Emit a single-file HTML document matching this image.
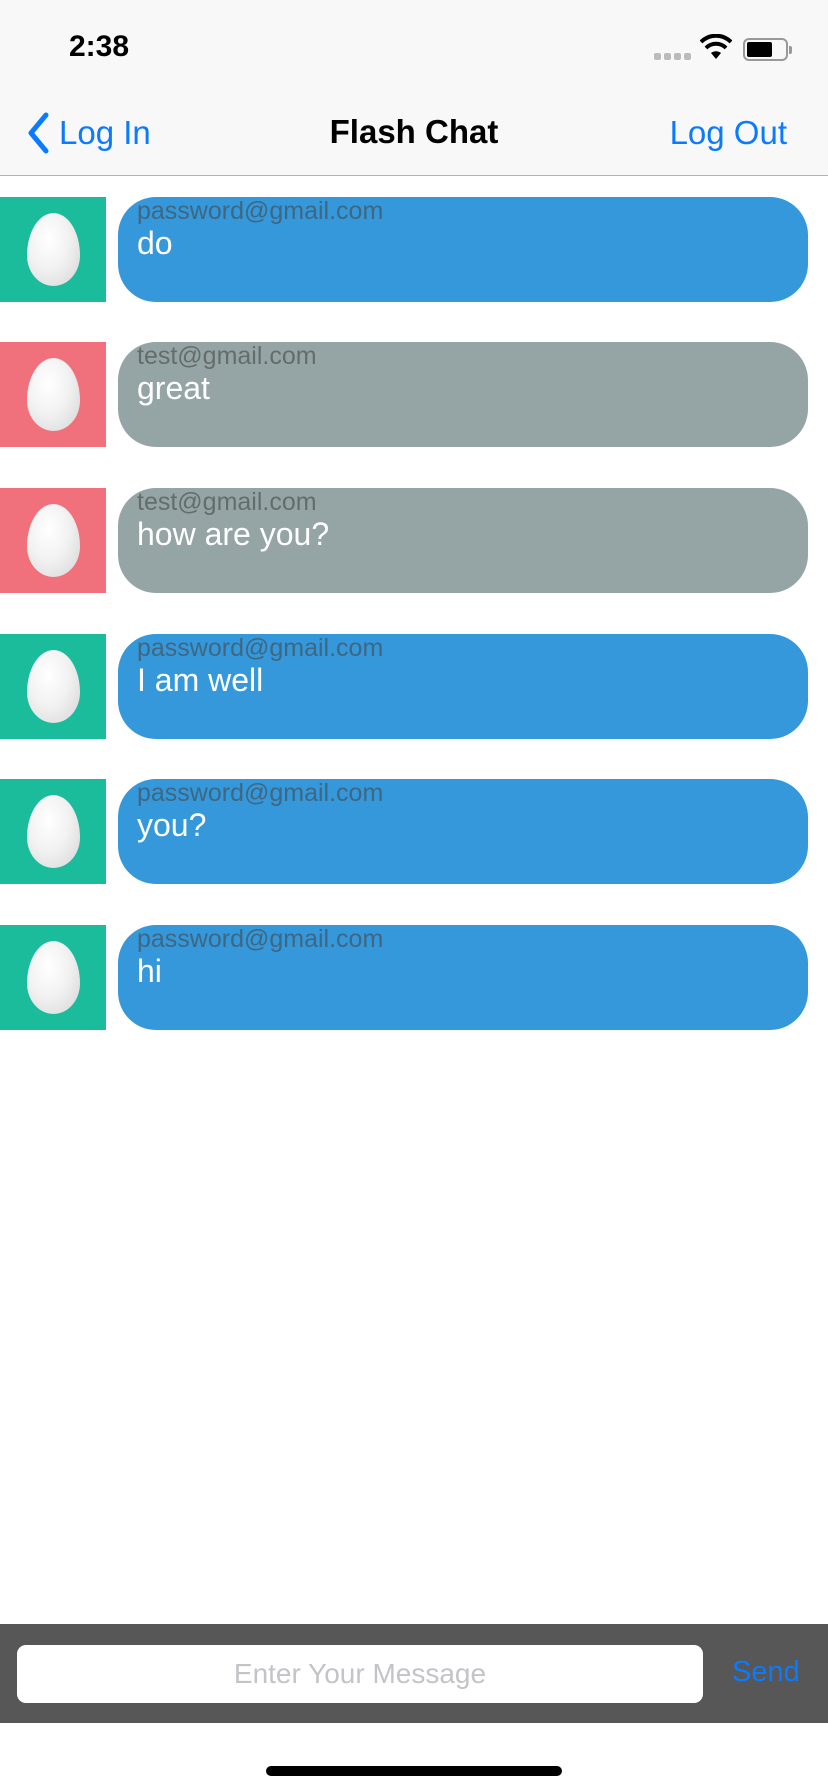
<!DOCTYPE html>
<html><head><meta charset="utf-8"><style>
*{margin:0;padding:0;box-sizing:border-box}
body{width:828px;height:1792px;background:#fff;font-family:"Liberation Sans",sans-serif;position:relative;overflow:hidden}
.top{position:absolute;left:0;top:0;width:828px;height:176px;background:#f8f8f8;border-bottom:1px solid #b2b2b2}
.abs{position:absolute}
.row{position:absolute;left:0;width:828px;height:105px}
.av{position:absolute;left:0;top:0;width:106px;height:105px}
.egg{position:absolute;left:27px;top:16px;width:53px;height:73px;border-radius:50% 50% 50% 50%/58% 58% 42% 42%;background:radial-gradient(ellipse at 40% 35%,#fff 0%,#f2f2f2 45%,#d4d4d4 100%)}
.bub{position:absolute;left:118px;top:0;width:690px;height:105px;border-radius:38px}
.em{position:absolute;left:19px;top:0;font-size:25px;color:rgba(70,70,70,.6)}
.msg{position:absolute;left:19px;top:28px;font-size:32px;color:#fff}
.g{background:#1abc9c}.r{background:#f0717b}.b{background:#3598db}.y{background:#95a5a6}
</style></head><body>
<div class="top">
 <div class="abs" style="left:69px;top:30px;font-size:30px;font-weight:bold;color:#000">2:38</div>
 <div class="abs" style="left:654px;top:53px;width:38px;height:7px">
  <span class="abs" style="left:0;width:7px;height:7px;background:#bbb;border-radius:2px"></span>
  <span class="abs" style="left:10px;width:7px;height:7px;background:#bbb;border-radius:2px"></span>
  <span class="abs" style="left:20px;width:7px;height:7px;background:#bbb;border-radius:2px"></span>
  <span class="abs" style="left:30px;width:7px;height:7px;background:#bbb;border-radius:2px"></span>
 </div>
 <svg class="abs" style="left:700px;top:34px" width="32" height="26" viewBox="0 0 32 26"><path d="M16 25 L11 19 A8 8 0 0 1 21 19 Z" fill="#000"/><path d="M6 14 A14 14 0 0 1 26 14" stroke="#000" stroke-width="4" fill="none"/><path d="M1 8 A21 21 0 0 1 31 8" stroke="#000" stroke-width="4" fill="none"/></svg>
 <div class="abs" style="left:743px;top:38px;width:45px;height:23px;border:2px solid #999;border-radius:6px"><div style="position:absolute;left:2px;top:2px;width:25px;height:15px;background:#000;border-radius:2px"></div></div>
 <div class="abs" style="left:789px;top:46px;width:3px;height:8px;background:#999;border-radius:0 2px 2px 0"></div>
 <svg class="abs" style="left:24px;top:112px" width="28" height="42" viewBox="0 0 28 42"><path d="M22 3 L7 21 L22 39" stroke="#0a7aff" stroke-width="5" fill="none" stroke-linecap="round" stroke-linejoin="round"/></svg>
 <div class="abs" style="left:59px;top:114px;font-size:33px;color:#0a7aff">Log In</div>
 <div class="abs" style="left:0;width:828px;text-align:center;top:113px;font-size:33px;font-weight:bold;color:#000">Flash Chat</div>
 <div class="abs" style="right:41px;top:114px;font-size:33px;color:#0a7aff">Log Out</div>
</div>

<div class="row" style="top:197px"><div class="av g"><div class="egg"></div></div><div class="bub b"><div class="em">password@gmail.com</div><div class="msg">do</div></div></div>
<div class="row" style="top:342px"><div class="av r"><div class="egg"></div></div><div class="bub y"><div class="em">test@gmail.com</div><div class="msg">great</div></div></div>
<div class="row" style="top:488px"><div class="av r"><div class="egg"></div></div><div class="bub y"><div class="em">test@gmail.com</div><div class="msg">how are you?</div></div></div>
<div class="row" style="top:634px"><div class="av g"><div class="egg"></div></div><div class="bub b"><div class="em">password@gmail.com</div><div class="msg">I am well</div></div></div>
<div class="row" style="top:779px"><div class="av g"><div class="egg"></div></div><div class="bub b"><div class="em">password@gmail.com</div><div class="msg">you?</div></div></div>
<div class="row" style="top:925px"><div class="av g"><div class="egg"></div></div><div class="bub b"><div class="em">password@gmail.com</div><div class="msg">hi</div></div></div>

<div class="abs" style="left:0;top:1624px;width:828px;height:99px;background:#575757">
 <div class="abs" style="left:17px;top:21px;width:686px;height:58px;background:#fff;border-radius:9px;text-align:center;line-height:58px;font-size:28px;color:#c4c4c8">Enter Your Message</div>
 <div class="abs" style="left:732px;top:32px;font-size:29px;color:#0a7aff">Send</div>
</div>
<div class="abs" style="left:266px;top:1766px;width:296px;height:10px;background:#000;border-radius:5px"></div>
</body></html>
